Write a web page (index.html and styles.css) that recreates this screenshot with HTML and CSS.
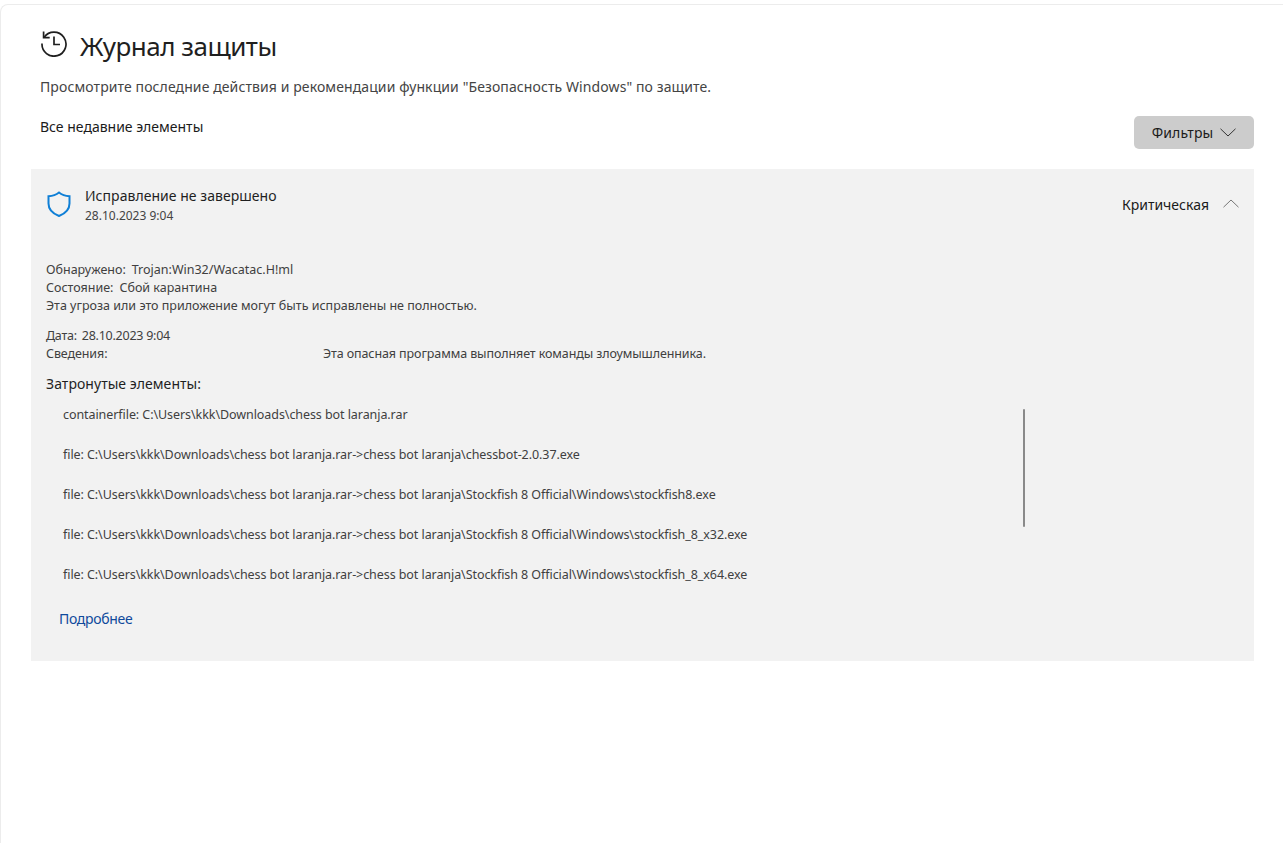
FILE: index.html
```html
<!DOCTYPE html>
<html lang="ru">
<head>
<meta charset="utf-8">
<title>Журнал защиты</title>
<link rel="stylesheet" href="styles.css">
</head>
<body>
<main class="frame">
  <header class="title-row">
    <svg class="history-icon" viewBox="0 0 28 28" width="28" height="28" aria-hidden="true">
      <path d="M4.2 8.2A12 12 0 1 1 2 14.5" fill="none" stroke="#1f1f1f" stroke-width="1.7"/>
      <path d="M3.6 2.6V8.7H9.7" fill="none" stroke="#1f1f1f" stroke-width="1.7"/>
      <path d="M14 7.5V15.5H20" fill="none" stroke="#1f1f1f" stroke-width="1.7"/>
    </svg>
    <h1 class="title">Журнал защиты</h1>
  </header>
  <p class="subtitle">Просмотрите последние действия и рекомендации функции "Безопасность Windows" по защите.</p>
  <div class="filter-row">
    <span class="filter-label">Все недавние элементы</span>
    <button class="filter-button" type="button">Фильтры
      <svg viewBox="0 0 16 9" width="16" height="9" aria-hidden="true"><path d="M.5.8 8 8 15.500.8" fill="none" stroke="#333" stroke-width="1"/></svg>
    </button>
  </div>
  <section class="card">
    <div class="card-head">
      <svg class="shield" viewBox="0 0 24 26" width="24" height="26" aria-hidden="true">
        <path d="M12 1.500C15 4 18.500 5 22.500 5.200V12.500C22.500 18.500 18.500 22.500 12 25C5.500 22.500 1.500 18.500 1.500 12.500V5.200C5.500 5 9 4 12 1.500Z" fill="none" stroke="#0f7fd6" stroke-width="2"/>
      </svg>
      <div class="head-text">
        <div class="head-title">Исправление не завершено</div>
        <div class="head-date">28.10.2023 9:04</div>
      </div>
      <span class="severity">Критическая</span>
      <svg class="caret" viewBox="0 0 16 9" width="16" height="9" aria-hidden="true"><path d="M.5 8.200 8 1 15.500 8.200" fill="none" stroke="#777" stroke-width="1"/></svg>
    </div>
    <div class="details">
      <div class="line"><span class="key">Обнаружено:</span><span>Trojan:Win32/Wacatac.H!ml</span></div>
      <div class="line"><span class="key">Состояние:</span><span>Сбой карантина</span></div>
      <div class="line">Эта угроза или это приложение могут быть исправлены не полностью.</div>
      <div class="line line-gap date-line"><span class="key">Дата:</span><span>28.10.2023 9:04</span></div>
      <div class="line info-line"><span class="info-key">Сведения:</span><span>Эта опасная программа выполняет команды злоумышленника.</span></div>
      <h2 class="affected">Затронутые элементы:</h2>
      <div class="items">
        <ul class="item-list">
          <li>containerfile: C:\Users\kkk\Downloads\chess bot laranja.rar</li>
          <li>file: C:\Users\kkk\Downloads\chess bot laranja.rar-&gt;chess bot laranja\chessbot-2.0.37.exe</li>
          <li>file: C:\Users\kkk\Downloads\chess bot laranja.rar-&gt;chess bot laranja\Stockfish 8 Official\Windows\stockfish8.exe</li>
          <li>file: C:\Users\kkk\Downloads\chess bot laranja.rar-&gt;chess bot laranja\Stockfish 8 Official\Windows\stockfish_8_x32.exe</li>
          <li>file: C:\Users\kkk\Downloads\chess bot laranja.rar-&gt;chess bot laranja\Stockfish 8 Official\Windows\stockfish_8_x64.exe</li>
        </ul>
        <div class="scrollbar"></div>
      </div>
      <a class="more" href="#">Подробнее</a>
    </div>
  </section>
</main>
</body>
</html>
```
FILE: styles.css
```css
* { box-sizing: border-box; }
html, body { margin: 0; height: 100%; overflow: hidden; background: #fff; }
body { padding-top: 4px; font-family: "Noto Sans", "Liberation Sans", sans-serif; color: #1b1b1b; }
.frame {
  height: 839px;
  border-top: 1px solid #ececec;
  border-left: 1px solid #ececec;
  border-top-left-radius: 8px;
  padding: 0 29px 0 30px;
}
.title-row { display: flex; align-items: center; gap: 12px; padding: 18px 0 0 9px; height: 64px; }
.history-icon { flex: none; margin-bottom: 6px; }
.title { margin: 0; font-size: 26px; font-weight: 400; letter-spacing: -.5px; color: #1f1f1f; line-height: 36px; }
.subtitle { margin: 8px 0 0 9px; font-size: 14px; line-height: 20px; letter-spacing: .1px; color: #444; }
.filter-row { display: flex; justify-content: space-between; align-items: flex-start; margin: 19px 0 0 9px; height: 53px; }
.filter-label { font-size: 14px; line-height: 20px; letter-spacing: 0; margin-top: 1px; }
.filter-button {
  display: flex; align-items: center; justify-content: center; gap: 7px;
  width: 120px; height: 33px;
  border: 0; border-radius: 5px; background: #cccccc;
  font: inherit; font-size: 14px; letter-spacing: .13px; color: #1b1b1b;
}
.card { background: #f2f2f2; height: 492px; }
.card-head { display: flex; align-items: center; height: 70px; padding: 0 15px 0 16px; }
.shield { flex: none; }
.head-text { margin-left: 14px; flex: 1; padding-top: 1px; }
.head-title { font-size: 14px; line-height: 20px; letter-spacing: .04px; color: #1f1f1f; }
.head-date { font-size: 12px; line-height: 17px; margin-top: 1px; letter-spacing: 0; color: #444; }
.severity { font-size: 14px; letter-spacing: 0; margin-right: 14px; }
.caret { flex: none; margin-top: -2px; }
.details { padding: 22px 0 0 15px; font-size: 12.5px; color: #404040; letter-spacing: 0; }
.line { display: flex; line-height: 18px; }
.key { margin-right: 6px; }
.line-gap { margin-top: 12px; }
.date-line { letter-spacing: -.25px; }
.date-line .key { margin-right: 5px; }
.info-key { width: 277px; flex: none; }
.info-line { letter-spacing: -.1px; }
.affected { margin: 11px 0 0; font-size: 14px; font-weight: 400; line-height: 20px; letter-spacing: .05px; color: #1f1f1f; }
.items { display: flex; justify-content: space-between; height: 180px; margin-top: 7px; width: 979px; padding-left: 17px; letter-spacing: -.07px; }
.item-list { list-style: none; margin: 0; padding: 0; }
.item-list li { height: 40px; line-height: 18px; padding-top: 5px; white-space: nowrap; }
.scrollbar { width: 2px; height: 118px; background: #8a8a8a; border-radius: 1px; margin-top: 8px; }
.more { display: inline-block; margin: 28px 0 0 13px; font-size: 14px; line-height: 20px; letter-spacing: -.3px; color: #0f4a9c; text-decoration: none; }
```
